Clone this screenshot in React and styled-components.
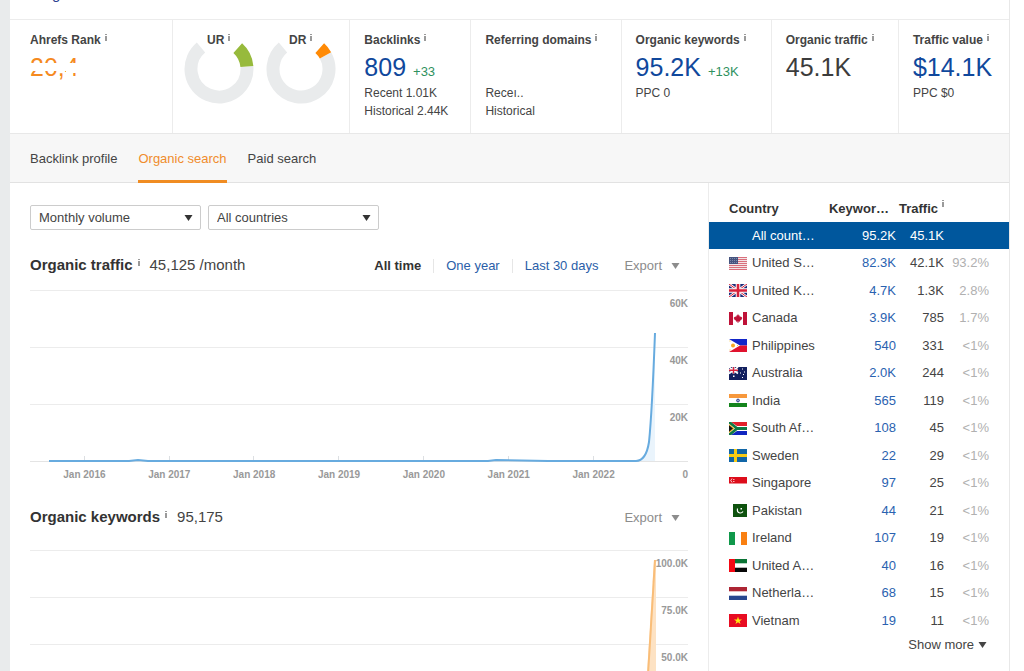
import React from "react";
import styled, { createGlobalStyle } from "styled-components";

const donutArc = (from, to) => {
  const point = (deg) => {
    const a = (deg * Math.PI) / 180;
    return `${(35 + 28 * Math.sin(a)).toFixed(2)} ${(35 - 28 * Math.cos(a)).toFixed(2)}`;
  };
  return `M${point(from)} A28 28 0 ${to - from > 180 ? 1 : 0} 1 ${point(to)}`;
};

const years = ["Jan 2016", "Jan 2017", "Jan 2018", "Jan 2019", "Jan 2020", "Jan 2021", "Jan 2022"];

const countries = [
  { flag: "us", name: "United S…", keywords: "82.3K", traffic: "42.1K", share: "93.2%" },
  { flag: "gb", name: "United K…", keywords: "4.7K", traffic: "1.3K", share: "2.8%" },
  { flag: "ca", name: "Canada", keywords: "3.9K", traffic: "785", share: "1.7%" },
  { flag: "ph", name: "Philippines", keywords: "540", traffic: "331", share: "<1%" },
  { flag: "au", name: "Australia", keywords: "2.0K", traffic: "244", share: "<1%" },
  { flag: "in", name: "India", keywords: "565", traffic: "119", share: "<1%" },
  { flag: "za", name: "South Af…", keywords: "108", traffic: "45", share: "<1%" },
  { flag: "se", name: "Sweden", keywords: "22", traffic: "29", share: "<1%" },
  { flag: "sg", name: "Singapore", keywords: "97", traffic: "25", share: "<1%" },
  { flag: "pk", name: "Pakistan", keywords: "44", traffic: "21", share: "<1%" },
  { flag: "ie", name: "Ireland", keywords: "107", traffic: "19", share: "<1%" },
  { flag: "ae", name: "United A…", keywords: "40", traffic: "16", share: "<1%" },
  { flag: "nl", name: "Netherla…", keywords: "68", traffic: "15", share: "<1%" },
  { flag: "vn", name: "Vietnam", keywords: "19", traffic: "11", share: "<1%" },
];

const flags = {
  us: (
    <>
      <path fill="#f3e4e6" d="M0 0h18v13H0z" />
      <path stroke="#d9707c" d="M0 .5h18M0 2.5h18M0 4.5h18M0 6.5h18M0 8.5h18M0 10.5h18M0 12.5h18" />
      <path fill="#46547f" d="M0 0h9v7H0z" />
      <path stroke="#7c88aa" strokeDasharray="1 1" d="M1 1.5h7M1 3.5h7M1 5.5h7" />
    </>
  ),
  gb: (
    <>
      <path fill="#1d2b78" d="M0 0h18v13H0z" />
      <path stroke="#fff" strokeWidth="2.6" d="m0 0 18 13M18 0 0 13" />
      <path stroke="#d8213b" d="m0 0 18 13M18 0 0 13" />
      <path stroke="#fff" strokeWidth="4.6" d="M9 0v13M0 6.5h18" />
      <path stroke="#d8213b" strokeWidth="2.6" d="M9 0v13M0 6.5h18" />
    </>
  ),
  ca: (
    <>
      <path fill="#fff" d="M0 0h18v13H0z" />
      <path fill="#bf1238" d="M0 0h4v13H0zM14 0h4v13h-4zM9 2l1 1.700.9-.3-.2 1.900 1.300-1 .2.900 1-.1-.4 1.300.6.4-2.600 2.100.1.800-1.500-.3V11h-.8V9.400l-1.500.3.1-.8-2.600-2.100.6-.4-.4-1.300 1 .1.2-.9 1.300 1-.2-1.900.9.3z" />
    </>
  ),
  ph: (
    <>
      <path fill="#1226c8" d="M0 0h18v6.500H0z" />
      <path fill="#e0122e" d="M0 6.500h18V13H0z" />
      <path fill="#fff" d="M0 0l11 6.500L0 13z" />
      <circle cx="4" cy="6.500" r="2" fill="#f6a723" />
      <path fill="#f6c84e" d="M.5 1.500h1v1h-1zM.5 10.500h1v1h-1zM8 6h1v1H8z" />
    </>
  ),
  au: (
    <>
      <path fill="#13205f" d="M0 0h18v13H0z" />
      <path stroke="#fff" strokeWidth="1.600" d="m0 0 9 6.500M9 0 0 6.500" />
      <path stroke="#fff" strokeWidth="2.400" d="M4.500 0v6.500M0 3.250h9" />
      <path stroke="#d8213b" strokeWidth="1.300" d="M4.500 0v6.500M0 3.250h9" />
      <path fill="#fff" d="M4 8.500h1.500V10H4zM13 1.500h1v1h-1zM11 5.500h1v1h-1zM15 4.500h1v1h-1zM13 10h1v1h-1zM14 7h1v1h-1z" />
    </>
  ),
  in: (
    <>
      <path fill="#fff" d="M0 0h18v13H0z" />
      <path fill="#f7983c" d="M0 0h18v4H0z" />
      <path fill="#14841c" d="M0 9h18v4H0z" />
      <circle cx="9" cy="6.500" r="1.400" fill="#a5aed2" stroke="#34448e" />
    </>
  ),
  za: (
    <>
      <path fill="#fff" d="M0 0h18v13H0z" />
      <path fill="#e3202b" d="M2 0h16v4H8z" />
      <path fill="#1126c0" d="M2 13h16V9H8z" />
      <path fill="none" stroke="#117a45" strokeWidth="2.800" d="M0 0l8 6.500L0 13M8 6.500h10" />
      <path fill="#f5b52a" d="M0 2l5.500 4.500L0 11z" />
      <path fill="#141414" d="M0 3.200l4 3.300-4 3.300z" />
    </>
  ),
  se: (
    <>
      <path fill="#1166a7" d="M0 0h18v13H0z" />
      <path fill="#f8cb15" d="M5 0h3v13H5zM0 5h18v3H0z" />
    </>
  ),
  sg: (
    <>
      <path fill="#fff" d="M0 0h18v13H0z" />
      <path fill="#dd0d1b" d="M0 0h18v6.500H0z" />
      <path fill="none" stroke="#fff" strokeWidth=".8" d="M3 1.500q-2.500 2 0 4" />
      <path fill="#f7b4b8" d="M4 2h1.500v1H4zM4 4h1.500v1H4z" />
    </>
  ),
  pk: (
    <>
      <path fill="#fff" d="M0 0h4v13H0z" />
      <path fill="#0e520e" d="M4 0h14v13H4z" />
      <path fill="none" stroke="#fff" strokeWidth="1.200" d="M8.500 4.500q-.8 4 2.500 4.500 2 .2 3-1.500" />
      <path fill="#fff" d="M11.500 4h1.500v1.500h-1.500z" />
    </>
  ),
  ie: (
    <>
      <path fill="#fff" d="M0 0h18v13H0z" />
      <path fill="#10984a" d="M0 0h6v13H0z" />
      <path fill="#f98012" d="M12 0h6v13h-6z" />
    </>
  ),
  ae: (
    <>
      <path fill="#fff" d="M0 0h18v13H0z" />
      <path fill="#0a7334" d="M6 0h12v4.300H6z" />
      <path fill="#080808" d="M6 8.700h12V13H6z" />
      <path fill="#f40813" d="M0 0h6v13H0z" />
    </>
  ),
  nl: (
    <>
      <path fill="#fff" d="M0 0h18v13H0z" />
      <path fill="#ad2534" d="M0 0h18v4.300H0z" />
      <path fill="#27478f" d="M0 8.700h18V13H0z" />
    </>
  ),
  vn: (
    <>
      <path fill="#e80c22" d="M0 0h18v13H0z" />
      <path fill="#ffe811" d="m9 2.500 1 2.900h3l-2.400 1.800.9 2.900L9 8.300l-2.500 1.800.9-2.900L5 5.400h3z" />
    </>
  ),
};

const Info = () => (
  <InfoIcon viewBox="0 0 4 8" aria-hidden="true">
    <path fill="#9a9a9a" d="M1 0h2v1H1zM1 2h2v5H1z" />
  </InfoIcon>
);

const Triangle = () => (
  <TriangleIcon viewBox="0 0 9 6" aria-hidden="true">
    <path fill="currentColor" d="M.5 0h8l-4 6z" />
  </TriangleIcon>
);

const Gauge = ({ label, end, color }) => (
  <GaugeBox>
    <GaugeSvg viewBox="0 0 70 70" aria-hidden="true">
      <path d={donutArc(end, 320)} fill="none" stroke="#e9ebec" strokeWidth="13" />
      <path d={donutArc(42, end)} fill="none" stroke={color} strokeWidth="13" />
    </GaugeSvg>
    <MetricLabel>{label}<Info /></MetricLabel>
  </GaugeBox>
);

const App = () => {
  return (
    <>
      <GlobalStyle />
      <Page>
        <Panel>
          <TopStrip><TopLink href="#top">g</TopLink></TopStrip>
          <Metrics>
            <Metric $wide>
              <MetricLabel>Ahrefs Rank<Info /></MetricLabel>
              <RankValue>20,4</RankValue>
            </Metric>
            <GaugeCell>
              <Gauge label="UR" end={85} color="#97ba3c" />
              <Gauge label="DR" end={61} color="#ff8a05" />
            </GaugeCell>
            <Metric>
              <MetricLabel>Backlinks<Info /></MetricLabel>
              <MetricValue $link>809<Delta>+33</Delta></MetricValue>
              <MetricNote>Recent 1.01K</MetricNote>
              <MetricNote>Historical 2.44K</MetricNote>
            </Metric>
            <Metric>
              <MetricLabel>Referring domains<Info /></MetricLabel>
              <MetricValue />
              <MetricNote>Receı..</MetricNote>
              <MetricNote>Historical</MetricNote>
            </Metric>
            <Metric>
              <MetricLabel>Organic keywords<Info /></MetricLabel>
              <MetricValue $link>95.2K<Delta>+13K</Delta></MetricValue>
              <MetricNote>PPC 0</MetricNote>
            </Metric>
            <Metric>
              <MetricLabel>Organic traffic<Info /></MetricLabel>
              <MetricValue>45.1K</MetricValue>
            </Metric>
            <Metric>
              <MetricLabel>Traffic value<Info /></MetricLabel>
              <MetricValue $link>$14.1K</MetricValue>
              <MetricNote>PPC $0</MetricNote>
            </Metric>
          </Metrics>
          <Tabs>
            <Tab href="#backlinks">Backlink profile</Tab>
            <Tab href="#organic" $active>Organic search</Tab>
            <Tab href="#paid">Paid search</Tab>
          </Tabs>
          <Content>
            <Charts>
              <Filters>
                <SelectBox>
                  <Select aria-label="Volume"><option>Monthly volume</option></Select>
                  <SelectArrow><Triangle /></SelectArrow>
                </SelectBox>
                <SelectBox>
                  <Select aria-label="Country"><option>All countries</option></Select>
                  <SelectArrow><Triangle /></SelectArrow>
                </SelectBox>
              </Filters>
              <ChartHead>
                <ChartTitle>Organic traffic<Info /></ChartTitle>
                <ChartTotal>45,125 /month</ChartTotal>
                <Ranges>
                  <Range $active>All time</Range>
                  <Range>One year</Range>
                  <Range>Last 30 days</Range>
                </Ranges>
                <ExportButton>Export<Triangle /></ExportButton>
              </ChartHead>
              <Plot>
                <PlotRow $size={57}>60K</PlotRow>
                <PlotRow $size={57}>40K</PlotRow>
                <PlotRow $size={57}>20K</PlotRow>
                <PlotSvg viewBox="0 0 658 171" preserveAspectRatio="none" aria-hidden="true">
                  <path stroke="#dcdfe2" d="M54.500 166v5M139.500 166v5M223.500 166v5M308.500 166v5M393.500 166v5M478.500 166v5M563.500 166v5" />
                  <path fill="#eaf4fc" d="M606 171q10 0 13-19 3-29 6-109v128z" />
                  <path fill="none" stroke="#67abdf" strokeWidth="2" d="M19 171h80l9-1 10 1h340l8-1 52 1h88q10 0 13-19 3-29 6-109" />
                </PlotSvg>
              </Plot>
              <Axis>
                {years.map((year) => <Year key={year}>{year}</Year>)}
                <Zero>0</Zero>
              </Axis>
              <ChartHead $raised>
                <ChartTitle>Organic keywords<Info /></ChartTitle>
                <ChartTotal>95,175</ChartTotal>
                <ExportButton>Export<Triangle /></ExportButton>
              </ChartHead>
              <Plot>
                <PlotRow $size={47}>100.0K</PlotRow>
                <PlotRow $size={47}>75.0K</PlotRow>
                <PlotRow $size={47}>50.0K</PlotRow>
                <PlotSvg viewBox="0 0 658 141" preserveAspectRatio="none" aria-hidden="true">
                  <path fill="#fde2c3" d="M616 141l8-131h2v131z" />
                  <path fill="none" stroke="#f9bd78" strokeWidth="2" d="M617 141l8-131" />
                </PlotSvg>
              </Plot>
            </Charts>
            <Sidebar>
              <CountryTable>
                <colgroup>
                  <NameCol />
                  <KeywordsCol />
                  <TrafficCol />
                  <ShareCol />
                </colgroup>
                <thead>
                  <tr>
                    <NameHead scope="col">Country</NameHead>
                    <th scope="col">Keywor…</th>
                    <TrafficHead scope="col" colSpan="2">Traffic<Info /></TrafficHead>
                  </tr>
                </thead>
                <tbody>
                  <CountryRow $selected>
                    <NameCell><Country><Flag viewBox="0 0 18 13" aria-hidden="true" />All count…</Country></NameCell>
                    <Cell><a href="#all">95.2K</a></Cell>
                    <Cell>45.1K</Cell>
                    <ShareCell />
                  </CountryRow>
                  {countries.map((row) => (
                    <CountryRow key={row.flag}>
                      <NameCell>
                        <Country><Flag viewBox="0 0 18 13" aria-hidden="true">{flags[row.flag]}</Flag>{row.name}</Country>
                      </NameCell>
                      <Cell><a href={`#${row.flag}`}>{row.keywords}</a></Cell>
                      <Cell>{row.traffic}</Cell>
                      <ShareCell>{row.share}</ShareCell>
                    </CountryRow>
                  ))}
                </tbody>
              </CountryTable>
              <ShowMore>Show more<Triangle /></ShowMore>
            </Sidebar>
          </Content>
        </Panel>
      </Page>
    </>
  );
};

export default App;

const GlobalStyle = createGlobalStyle`
  * {
    box-sizing: border-box;
  }

  body {
    margin: 0;
    background-color: #fff;
    color: #444;
    font-family: "Liberation Sans", Arial, sans-serif;
    font-size: 13px;
    line-height: 18px;
  }

  button,
  select {
    font: inherit;
    color: inherit;
    margin: 0;
    padding: 0;
    border: none;
    background: none;
  }

  a {
    color: inherit;
    text-decoration: none;
  }
`;

const Page = styled.div`
  height: 100vh;
  overflow: hidden;
  padding-right: 14px;
  border-left: 10px solid #e9ebec;
`;

const Panel = styled.main`
  min-height: 100%;
  border-right: 1px solid #e8e8e8;
`;

const TopStrip = styled.div`
  display: flex;
  align-items: flex-end;
  height: 19px;
  padding: 0 42px 16px;
`;

const TopLink = styled.a`
  color: #2a3f8f;
  font-size: 15px;
`;

const Metrics = styled.section`
  display: grid;
  grid-template-columns: 162fr 178fr 120fr 150fr 150fr 127fr 111fr;
  height: 115px;
  border-top: 1px solid #ececec;
  border-bottom: 1px solid #e8e8e8;
`;

const Metric = styled.div`
  padding: 10px 0 0 ${(props) => (props.$wide ? 20 : 14)}px;
  white-space: nowrap;

  & + & {
    border-left: 1px solid #ececec;
  }
`;

const GaugeCell = styled.div`
  display: flex;
  gap: 12px;
  padding: 10px 0 0 11px;
  border-left: 1px solid #ececec;
  border-right: 1px solid #ececec;
`;

const GaugeBox = styled.div`
  display: grid;
  grid-template-columns: 70px;
  justify-items: center;
  align-items: start;

  & > * {
    grid-area: 1 / 1;
  }
`;

const GaugeSvg = styled.svg`
  width: 70px;
  height: 70px;
  margin-top: 4px;
`;

const MetricLabel = styled.div`
  display: flex;
  align-items: flex-start;
  gap: 3px;
  font-size: 12px;
  font-weight: bold;
  line-height: 20px;
`;

const InfoIcon = styled.svg`
  width: 4px;
  height: 8px;
  flex: none;
  margin-top: 4px;
`;

const TriangleIcon = styled.svg`
  width: 9px;
  height: 6px;
  flex: none;
`;

const MetricValue = styled.div`
  display: flex;
  align-items: baseline;
  gap: 7px;
  height: 34px;
  font-size: 25px;
  line-height: 34px;
  color: ${(props) => (props.$link ? "#10489c" : "#3c3c3c")};
`;

const Delta = styled.span`
  font-size: 13px;
  color: #2f9160;
`;

const RankValue = styled(MetricValue)`
  position: relative;
  color: #f58a1f;

  /* worn-out digits: only the tops and the feet stay visible */
  &::before,
  &::after {
    content: "";
    position: absolute;
    top: 13px;
    left: 0;
    width: 36px;
    height: 8px;
    background-color: #fff;
  }

  &::after {
    left: 36px;
    height: 10px;
  }
`;

const MetricNote = styled.div`
  font-size: 12px;
  line-height: 18px;
`;

const Tabs = styled.nav`
  display: flex;
  gap: 21px;
  height: 49px;
  padding-left: 20px;
  background-color: #f7f7f7;
  border-bottom: 1px solid #e2e2e2;
`;

const Tab = styled.a`
  height: 49px;
  line-height: 49px;
  color: ${(props) => (props.$active ? "#f08c2c" : "#444")};
  border-bottom: 3px solid ${(props) => (props.$active ? "#f08c22" : "transparent")};
`;

const Content = styled.div`
  display: flex;
  align-items: stretch;
`;

const Charts = styled.section`
  flex: 1;
  min-width: 0;
  padding: 22px 20px 0;
`;

const Filters = styled.div`
  display: flex;
  gap: 7px;
`;

const SelectBox = styled.div`
  position: relative;
  width: 171px;
`;

const Select = styled.select`
  appearance: none;
  display: block;
  width: 100%;
  height: 25px;
  padding: 0 24px 0 8px;
  border: 1px solid #ccc;
  border-radius: 2px;
  background-color: #fff;
`;

const SelectArrow = styled.span`
  position: absolute;
  top: 0;
  right: 8px;
  display: flex;
  align-items: center;
  height: 25px;
  color: #333;
  pointer-events: none;
`;

const ChartHead = styled.header`
  display: flex;
  align-items: center;
  height: 60px;
  padding: ${(props) => (props.$raised ? "0 0 6px" : "10px 0 0")};
`;

const ChartTitle = styled.h2`
  display: flex;
  align-items: flex-start;
  gap: 4px;
  margin: 0;
  color: #333;
  font-size: 15px;
  line-height: 20px;
`;

const ChartTotal = styled.span`
  flex: 1;
  padding-left: 9px;
  font-size: 15px;
  line-height: 20px;
`;

const Ranges = styled.div`
  display: flex;
  padding-top: 2px;
`;

const Range = styled.button`
  padding: 0 12px;
  line-height: 14px;
  font-weight: ${(props) => (props.$active ? "bold" : "normal")};
  color: ${(props) => (props.$active ? "#333" : "#2a5ea8")};

  & + & {
    border-left: 1px solid #e6e6e6;
  }
`;

const ExportButton = styled.button`
  display: flex;
  align-items: center;
  gap: 9px;
  padding: 2px 8px 0 14px;
  color: #8c8c8c;
`;

const Plot = styled.div`
  position: relative;
`;

const PlotRow = styled.div`
  height: ${(props) => props.$size}px;
  padding-top: 7px;
  border-top: 1px solid #ececec;
  color: #999;
  font-size: 10px;
  font-weight: bold;
  line-height: 12px;
  text-align: right;
`;

const PlotSvg = styled.svg`
  position: absolute;
  inset: 0;
  width: 100%;
  height: 100%;
  overflow: visible;
`;

const Axis = styled.div`
  display: flex;
  height: 29px;
  padding: 7px 0 0 12px;
  border-top: 1px solid #e4e4e4;
  color: #999;
  font-size: 10px;
  font-weight: bold;
  line-height: 12px;
`;

const Year = styled.span`
  flex: 1;
  text-align: center;
  white-space: nowrap;
`;

const Zero = styled.span`
  width: 52px;
  text-align: right;
`;

const Sidebar = styled.aside`
  width: 301px;
  border-left: 1px solid #ececec;
`;

const CountryTable = styled.table`
  width: 100%;
  table-layout: fixed;
  border-collapse: collapse;
  line-height: 18px;

  th {
    height: 39px;
    padding: 12px 0 0;
    color: #333;
    text-align: left;
  }

  td {
    padding: 0;
  }
`;

const NameCol = styled.col`
  width: auto;
`;

const KeywordsCol = styled.col`
  width: 67px;
`;

const TrafficCol = styled.col`
  width: 48px;
`;

const ShareCol = styled.col`
  width: 65px;
`;

const NameHead = styled.th`
  && {
    padding-left: 20px;
  }
`;

const TrafficHead = styled.th`
  && {
    padding-left: 3px;
  }

  svg {
    margin: 0 0 5px 3px;
  }
`;

const CountryRow = styled.tr`
  height: 27px;
  color: ${(props) => (props.$selected ? "#fff" : "#444")};
  background-color: ${(props) => (props.$selected ? "#00579d" : "transparent")};

  &:nth-child(even) {
    height: 28px;
  }

  a {
    color: ${(props) => (props.$selected ? "#fff" : "#2a62b0")};
  }
`;

const NameCell = styled.td`
  && {
    padding-left: 20px;
  }
`;

const Country = styled.span`
  display: flex;
  align-items: center;
  gap: 5px;
  white-space: nowrap;
`;

const Flag = styled.svg`
  width: 18px;
  height: 13px;
  flex: none;
`;

const Cell = styled.td`
  text-align: right;
`;

const ShareCell = styled.td`
  text-align: right;
  color: #b0b0b0;

  && {
    padding-right: 20px;
  }
`;

const ShowMore = styled.button`
  display: flex;
  align-items: center;
  gap: 4px;
  margin: 2px 22px 0 auto;
`;
